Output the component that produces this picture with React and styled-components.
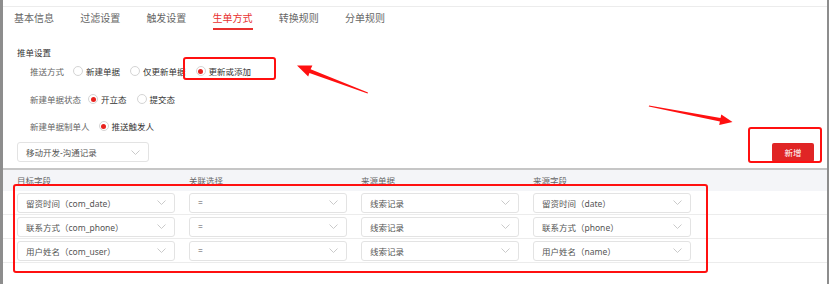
import React from "react";
import styled, { createGlobalStyle } from "styled-components";

const Global = createGlobalStyle`
  html, body { margin: 0; padding: 0; background: #fff; }
  body { font-family: "Noto Sans", "Noto Sans CJK SC", sans-serif; }
  * { box-sizing: border-box; }
`;

const Page = styled.div`
  position: relative;
  width: 829px;
  height: 284px;
  display: flex;
  overflow: hidden;
  background: #fff;
`;

const EdgeBar = styled.div`
  width: ${(p) => p.$w}px;
  flex: none;
  background: ${(p) => p.$c};
`;

const Content = styled.div`
  flex: 1;
  display: flex;
  flex-direction: column;
  min-width: 0;
`;

const TopStrip = styled.div`
  height: 7px;
  border-bottom: 1px solid #ececec;
`;

const Tabs = styled.div`
  display: flex;
  gap: 26.2px;
  padding-left: 11px;
  height: 23px;
`;

const Tab = styled.div`
  display: flex;
  align-items: center;
  font-size: 10px;
  color: ${(p) => (p.$active ? "#e8302e" : "#666")};
  border-bottom: 2px solid ${(p) => (p.$active ? "#e8302e" : "transparent")};
  font-family: "Noto Sans CJK SC", sans-serif;
`;

const Section = styled.div`
  padding: 15px 0 0 14px;
  display: flex;
  flex-direction: column;
`;

const SectionTitle = styled.div`
  font-size: 8.5px;
  line-height: 14px;
  color: #333;
  font-family: "Noto Sans CJK SC", sans-serif;
`;

const FormRow = styled.div`
  display: flex;
  align-items: center;
  height: 24px;
  margin-top: ${(p) => p.$mt}px;
  padding-left: 13px;
  font-family: "Noto Sans CJK SC", sans-serif;
  font-size: 8.5px;
`;

const FieldLabel = styled.span`
  color: #666;
  margin-right: ${(p) => p.$gap}px;
`;

const Option = styled.label`
  display: inline-flex;
  align-items: center;
  gap: 2px;
  margin-right: 10px;
  color: #333;
`;

const Radio = styled.span`
  width: 10px;
  height: 10px;
  border-radius: 50%;
  border: 1px solid #d4d4d4;
  display: inline-flex;
  align-items: center;
  justify-content: center;
  margin-right: 1px;
  &::after {
    content: "";
    width: 5px;
    height: 5px;
    border-radius: 50%;
    background: ${(p) => (p.$checked ? "#e8211d" : "transparent")};
  }
`;

const Toolbar = styled.div`
  display: flex;
  align-items: center;
  justify-content: space-between;
  margin-top: 4px;
  padding: 0 13px 6px 14px;
  border-bottom: 2px solid #c6c6c6;
`;

const SelectBox = styled.div`
  width: ${(p) => p.$w}px;
  height: 20px;
  border: 1px solid #e3e3e3;
  border-radius: 3px;
  background: #fff;
  display: flex;
  align-items: center;
  justify-content: space-between;
  padding: 0 8px 0 8px;
  font-size: 8.5px;
  color: #555;
  font-family: "Noto Sans", "Noto Sans CJK SC", sans-serif;
  white-space: nowrap;
`;

const Chevron = () => (
  <svg width="9" height="5" viewBox="0 0 9 5" fill="none">
    <path d="M0.5 0.5 L4.5 4.5 L8.5 0.5" stroke="#c4c4c4" strokeWidth="0.9" />
  </svg>
);

const AddButton = styled.button`
  width: 42px;
  height: 19px;
  border: none;
  border-radius: 2px;
  background: #e02525;
  color: #fff;
  font-size: 8.5px;
  font-family: "Noto Sans CJK SC", sans-serif;
  padding: 0;
`;

const Grid = styled.div`
  display: grid;
  grid-template-columns: repeat(4, 158px);
  column-gap: 14px;
  align-items: center;
  padding-left: 14px;
`;

const HeadRow = styled(Grid)`
  height: 21px;
  background: #f4f5f8;
  font-size: 8.5px;
  color: #666;
  font-family: "Noto Sans CJK SC", sans-serif;
  padding-bottom: 2px;
`;

const BodyRow = styled(Grid)`
  height: 24px;
  border-bottom: 1px solid #ececec;
`;

const Callout = styled.div`
  position: absolute;
  left: ${(p) => p.$x}px;
  top: ${(p) => p.$y}px;
  width: ${(p) => p.$w}px;
  height: ${(p) => p.$h}px;
  border: 2.5px solid #ff1010;
  border-radius: 3px;
  pointer-events: none;
`;

const ArrowLayer = styled.svg`
  position: absolute;
  left: 0;
  top: 0;
  pointer-events: none;
`;

const rows = [
  ["留资时间（com_date）", "=", "线索记录", "留资时间（date）"],
  ["联系方式（com_phone）", "=", "线索记录", "联系方式（phone）"],
  ["用户姓名（com_user）", "=", "线索记录", "用户姓名（name）"],
];

const tabs = ["基本信息", "过滤设置", "触发设置", "生单方式", "转换规则", "分单规则"];

export default function App() {
  return (
    <>
      <Global />
      <Page>
        <EdgeBar $w={3} $c="#8d8d8d" />
        <Content>
          <TopStrip />
          <Tabs>
            {tabs.map((t) => (
              <Tab key={t} $active={t === "生单方式"}>
                {t}
              </Tab>
            ))}
          </Tabs>
          <Section>
            <SectionTitle>推单设置</SectionTitle>
            <FormRow $mt={0}>
              <FieldLabel $gap={9}>推送方式</FieldLabel>
              <Option>
                <Radio />
                新建单据
              </Option>
              <Option>
                <Radio />
                仅更新单据
              </Option>
              <Option>
                <Radio $checked />
                更新或添加
              </Option>
            </FormRow>
            <FormRow $mt={4}>
              <FieldLabel $gap={7}>新建单据状态</FieldLabel>
              <Option>
                <Radio $checked />
                开立态
              </Option>
              <Option>
                <Radio />
                提交态
              </Option>
            </FormRow>
            <FormRow $mt={3}>
              <FieldLabel $gap={9}>新建单据制单人</FieldLabel>
              <Option>
                <Radio $checked />
                推送触发人
              </Option>
            </FormRow>
          </Section>
          <Toolbar>
            <SelectBox $w={132}>
              <span>移动开发-沟通记录</span>
              <Chevron />
            </SelectBox>
            <AddButton>新增</AddButton>
          </Toolbar>
          <HeadRow>
            <span>目标字段</span>
            <span>关联选择</span>
            <span>来源单据</span>
            <span>来源字段</span>
          </HeadRow>
          {rows.map((r, i) => (
            <BodyRow key={i}>
              {r.map((c, j) => (
                <SelectBox key={j} $w={158}>
                  <span>{c}</span>
                  <Chevron />
                </SelectBox>
              ))}
            </BodyRow>
          ))}
        </Content>
        <EdgeBar $w={2} $c="#8d8d8d" />

        <Callout $x={183} $y={57} $w={93} $h={23} />
        <Callout $x={748} $y={127} $w={74} $h={36} />
        <Callout $x={13} $y={184} $w={695} $h={89} />
        <ArrowLayer width="829" height="284" viewBox="0 0 829 284">
          <polygon
            fill="#ff1010"
            points="368,92.5 310.6,69.2 312.4,65.6 297,65.5 308.2,76.4 309.4,72.9 367.6,93.4"
          />
          <polygon
            fill="#ff1010"
            points="649,105.6 720.5,118 721.3,114.6 732.5,122 719.2,125 719.9,121.6 648.8,106.5"
          />
        </ArrowLayer>
      </Page>
    </>
  );
}
